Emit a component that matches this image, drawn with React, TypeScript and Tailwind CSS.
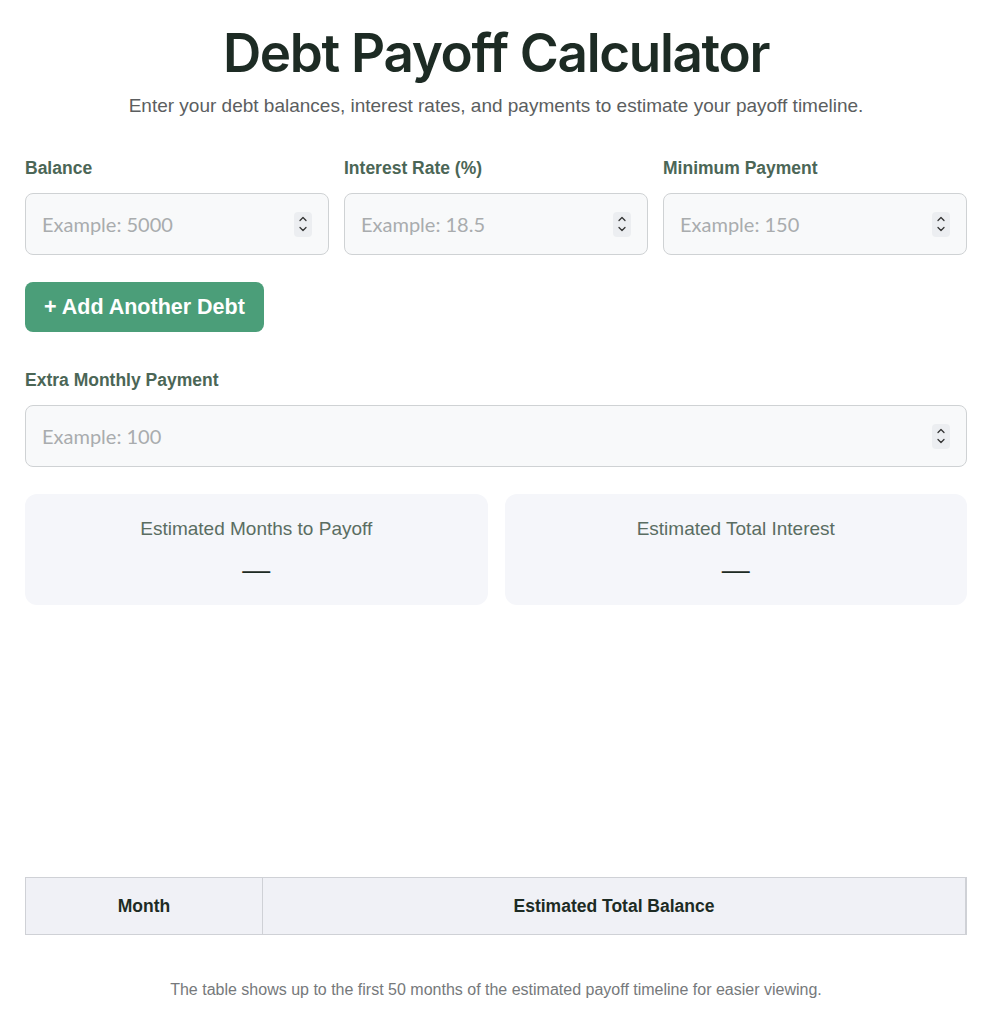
import { ChevronUp, ChevronDown } from "lucide-react";

const Spinner = () => (
  <span className="flex flex-col items-center justify-center w-[18px] h-[25px] rounded bg-[#eceef1] text-[#333]">
    <ChevronUp className="h-[12px] w-[12px] -mb-[1px]" strokeWidth={2.5} />
    <ChevronDown className="h-[12px] w-[12px] -mt-[1px]" strokeWidth={2.5} />
  </span>
);

const NumberField = ({ placeholder }: { placeholder: string }) => (
  <div className="flex items-center h-[62px] rounded-lg border border-[#cfd2d4] bg-[#f8f9fa] pl-4 pr-4">
    <input
      type="text"
      placeholder={placeholder}
      className="flex-1 min-w-0 bg-transparent outline-none text-[20px] text-[#333] placeholder:text-[#a9acae] font-['Lato',sans-serif]"
    />
    <Spinner />
  </div>
);

const fields = [
  { label: "Balance", placeholder: "Example: 5000" },
  { label: "Interest Rate (%)", placeholder: "Example: 18.5" },
  { label: "Minimum Payment", placeholder: "Example: 150" },
];

export default function App() {
  return (
    <div className="min-h-screen bg-white font-['Liberation_Sans',Arial,sans-serif] pl-[25px] pr-[22px]">
      <h1 className="pt-[21px] text-center text-[53px] leading-[64px] font-semibold tracking-[-0.025em] text-[#1d2b24] font-['Inter',sans-serif]">
        Debt Payoff Calculator
      </h1>
      <p className="mt-[10px] text-center text-[19px] leading-[22px] text-[#5b5e60]">
        Enter your debt balances, interest rates, and payments to estimate your payoff timeline.
      </p>

      <div className="mt-[40px] grid grid-cols-3 gap-[15px]">
        {fields.map((f) => (
          <div key={f.label}>
            <label className="block text-[17.5px] leading-[22px] font-bold text-[#4b6656]">{f.label}</label>
            <div className="mt-[14px]">
              <NumberField placeholder={f.placeholder} />
            </div>
          </div>
        ))}
      </div>

      <button className="mt-[27px] h-[50px] px-[19px] rounded-lg bg-[#4b9e79] text-white text-[21.5px] font-bold">
        + Add Another Debt
      </button>

      <label className="mt-[37px] block text-[17.5px] leading-[22px] font-bold text-[#4b6656]">
        Extra Monthly Payment
      </label>
      <div className="mt-[14px]">
        <NumberField placeholder="Example: 100" />
      </div>

      <div className="mt-[27px] grid grid-cols-2 gap-[17px]">
        {["Estimated Months to Payoff", "Estimated Total Interest"].map((t) => (
          <div key={t} className="h-[111px] rounded-xl bg-[#f5f6fa] flex flex-col items-center pt-[24px]">
            <div className="text-[19px] leading-[22px] text-[#5a6d62]">{t}</div>
            <div className="mt-[18px] text-[28px] leading-[24px] text-[#1d2b24]">—</div>
          </div>
        ))}
      </div>

      <div className="h-[272px]" />

      <table className="w-full border-collapse border border-[#cfd1d6]">
        <thead>
          <tr className="bg-[#f0f1f6]">
            <th className="w-[237px] h-[57px] border border-[#cfd1d6] text-[17.5px] font-bold text-[#1d2b24]">Month</th>
            <th className="h-[57px] border border-[#cfd1d6] border-r-2 text-[17.5px] font-bold text-[#1d2b24]">Estimated Total Balance</th>
          </tr>
        </thead>
      </table>

      <p className="mt-[46px] text-center text-[16px] leading-[18px] text-[#76797b]">
        The table shows up to the first 50 months of the estimated payoff timeline for easier viewing.
      </p>
    </div>
  );
}
